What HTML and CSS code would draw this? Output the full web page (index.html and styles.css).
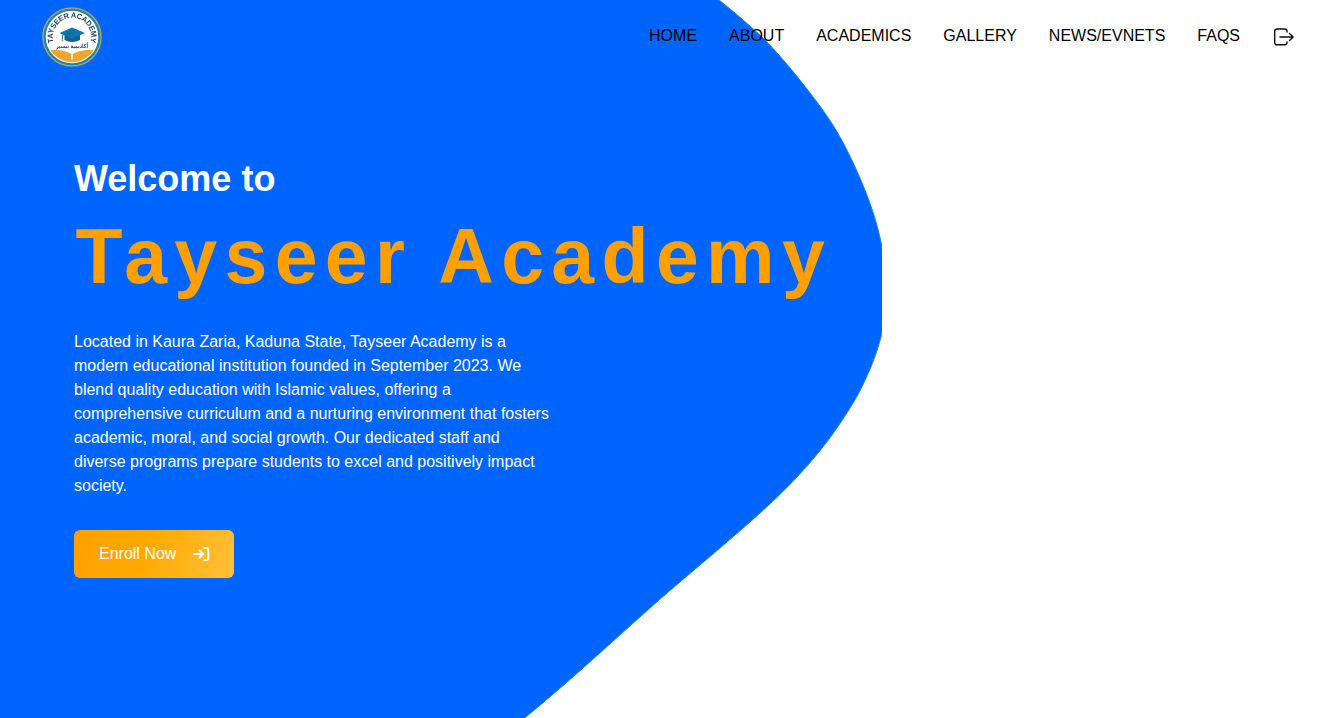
FILE: index.html
```html
<!DOCTYPE html>
<html lang="en">
<head>
<meta charset="utf-8">
<title>Tayseer Academy</title>
<link rel="stylesheet" href="styles.css">
</head>
<body>
<div class="page">
  <svg class="wave" viewBox="0 0 882 718" aria-hidden="true">
    <path class="wave-edge" d="M-4 -4H714C733 11 748 24 762 37C778 53 793 71 807 89C817 102 827 115 836 130C845 145 853 162 860 178C869 199 877 221 882 247L886 270V310L882 333C878 349 873 363 867 376C862 387 857 397 850 408C823 452 792 485 750 522C723 546 695 569 667 593C620 634 574 678 521 721H-4Z"/>
  </svg>
  <header class="header">
    <a class="logo" href="#">
      <svg width="60" height="60" viewBox="0 0 60 60">
        <defs>
          <path id="arc" d="M11.980 36.560A19.200 19.200 0 1 1 48.020 36.560"/>
          <clipPath id="inner"><circle cx="30" cy="30" r="25.200"/></clipPath>
        </defs>
        <circle cx="30" cy="30" r="30" fill="#2f86b8"/>
        <circle cx="30" cy="30" r="28.900" fill="none" stroke="#c9a052" stroke-width="1.300"/>
        <circle cx="30" cy="30" r="28.200" fill="#148ab0"/>
        <circle cx="30" cy="30" r="26.300" fill="#fff"/>
        <path clip-path="url(#inner)" d="M0 43C12 42.500 25 43 30 48C35 43 48 42.500 60 43V60H0Z" fill="#f5a329"/>
        <path d="M30 48V52.500" stroke="#fff" stroke-width="1.600"/>
        <path d="M22.500 27V33Q30 37 38 33V27Z" fill="#17608f"/>
        <path d="M17.500 26L30 20.500L43 26L30 31.500Z" fill="#0d76ad"/>
        <path d="M30 26L20.500 28V33" fill="none" stroke="#176490" stroke-width=".9"/>
        <circle cx="20.500" cy="33.500" r="1" fill="#d99930"/>
        <text class="logo-name"><textPath href="#arc" startOffset="50%" text-anchor="middle" textLength="71">TAYSEER ACADEMY</textPath></text>
        <text class="logo-arabic" x="30" y="40.500" text-anchor="middle" textLength="32" lengthAdjust="spacingAndGlyphs">أكاديمية تيسير</text>
      </svg>
    </a>
    <nav class="nav">
      <a href="#">HOME</a>
      <a href="#">ABOUT</a>
      <a href="#">ACADEMICS</a>
      <a href="#">GALLERY</a>
      <a href="#">NEWS/EVNETS</a>
      <a href="#">FAQS</a>
      <a class="login" href="#" aria-label="Login">
        <svg width="24" height="24" viewBox="0 0 24 24" fill="none" stroke="#111" stroke-width="1.400" stroke-linecap="round" stroke-linejoin="round"><path d="M15 7V6.200Q15 4 12.800 4H5Q2.700 4 2.700 6.400V17.400Q2.700 19.800 5 19.800H12.800Q15 19.800 15 17.600V17M8 12H21M17.500 8.500L21.200 12L17.500 15.500"/></svg>
      </a>
    </nav>
  </header>
  <main class="hero">
    <h2 class="welcome">Welcome to</h2>
    <h1 class="title">Tayseer Academy</h1>
    <p class="intro">Located in Kaura Zaria, Kaduna State, Tayseer Academy is a modern educational institution founded in September 2023. We blend quality education with Islamic values, offering a comprehensive curriculum and a nurturing environment that fosters academic, moral, and social growth. Our dedicated staff and diverse programs prepare students to excel and positively impact society.</p>
    <a class="enroll" href="#">Enroll Now
      <svg width="18" height="18" viewBox="0 0 18 18" fill="none" stroke="#fff" stroke-width="2" stroke-linecap="round" stroke-linejoin="round"><path d="M2 9H11M7.500 5.200L11.300 9L7.500 12.800M12.300 3H14.500Q16.300 3 16.300 4.800V13.200Q16.300 15 14.500 15H12.300"/></svg>
    </a>
  </main>
</div>
</body>
</html>
```

FILE: styles.css
```css
* { box-sizing: border-box; }
body { margin: 0; font-family: "Liberation Sans", Arial, sans-serif; font-size: 16px; line-height: 24px; color: #000; background: #fff; }
a { color: inherit; text-decoration: none; }
h1, h2, p { margin: 0; }
svg { display: block; flex: none; }
.page { position: relative; width: 100%; height: 718px; overflow: hidden; }
.wave { position: absolute; left: 0; top: 0; width: 882px; height: 718px; }
.wave-edge { fill: #0065ff; stroke: #1a86ee; stroke-width: 1; }
.header { position: relative; display: flex; justify-content: space-between; height: 74px; padding: 7px 42px; }
.logo svg { filter: blur(.3px); }
.logo-name { font-size: 7.500px; font-weight: bold; fill: #25465c; }
.logo-arabic { font-family: "DejaVu Sans", sans-serif; font-size: 6px; font-weight: bold; fill: #234960; }
.nav { display: flex; gap: 32px; padding-top: 17px; }
.login { padding-top: 1px; }
.hero { position: relative; padding: 85px 74px 0; }
.welcome { font-size: 36px; line-height: 40px; color: #fff; }
.title { margin-top: 17px; padding-left: 1.5px; font-size: 77px; line-height: 80px; letter-spacing: 7.350px; color: #ffa000; white-space: nowrap; }
.intro { width: 480px; margin-top: 34px; color: #fff; }
.enroll { display: flex; align-items: center; justify-content: space-between; width: 160px; height: 48px; margin-top: 32px; padding: 0 24px 0 25px; border-radius: 6px; color: #fff; background: linear-gradient(110deg, #ffa000, #ffaa00 45%, #ffc03a); }
```
